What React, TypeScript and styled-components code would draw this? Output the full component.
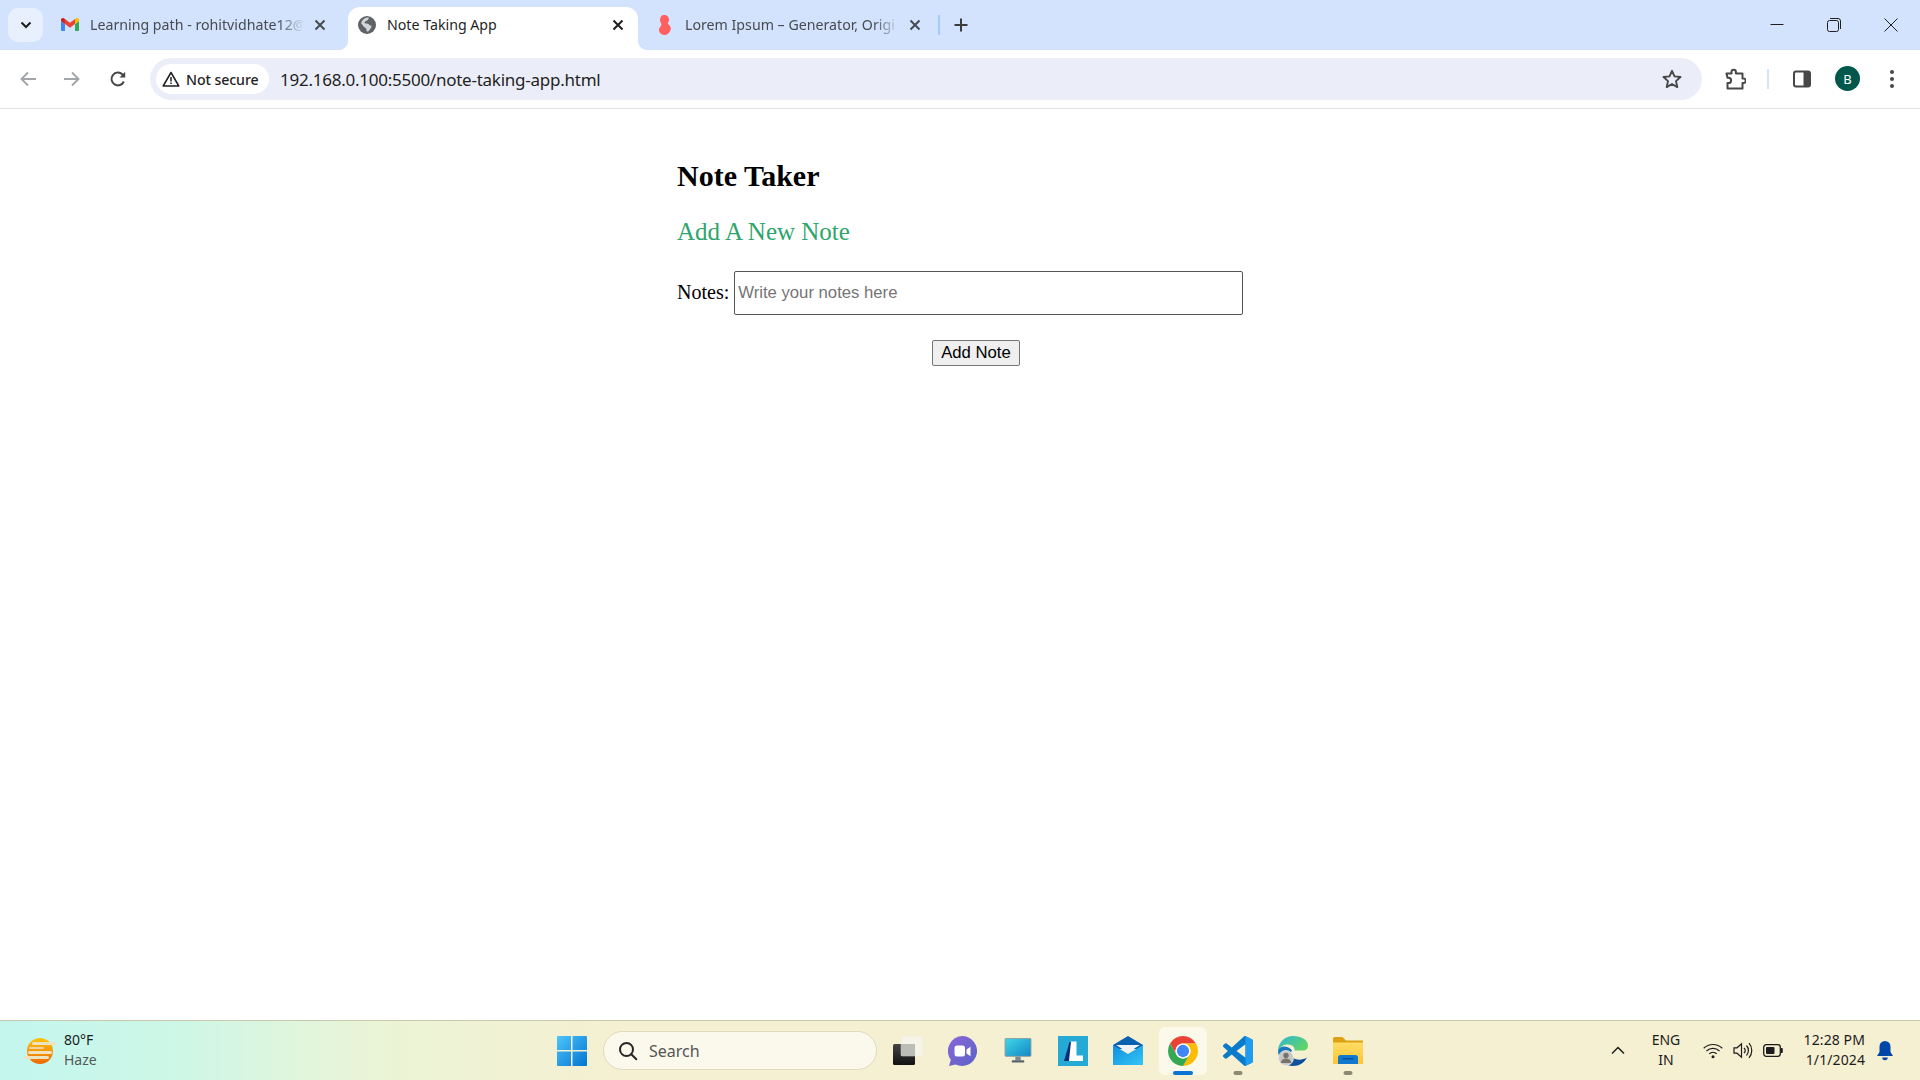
import React from "react";
import styled, { createGlobalStyle } from "styled-components";

const Global = createGlobalStyle`
  html, body { margin: 0; padding: 0; height: 100%; overflow: hidden; background: #fff; }
  #root { height: 100%; }
  * { box-sizing: border-box; }
`;

const uiFont = `"Noto Sans", "Open Sans", "Liberation Sans", sans-serif`;

const Page = styled.div`
  width: 1920px;
  height: 1080px;
  display: flex;
  flex-direction: column;
  font-family: ${uiFont};
`;

/* ---------- tab strip ---------- */
const TabStrip = styled.div`
  height: 50px;
  flex: none;
  background: #d3e3fd;
  display: flex;
  align-items: flex-end;
  padding-left: 8px;
`;
const TabList = styled.button`
  width: 35px;
  height: 34px;
  margin: 0 8px 8px 0;
  flex: none;
  padding: 0;
  border: 0;
  border-radius: 10px;
  background: #e9f0fd;
  display: flex;
  align-items: center;
  justify-content: center;
`;
const Tab = styled.div<{ $active?: boolean; $width: number; $left: number; $right: number }>`
  position: relative;
  flex: none;
  width: ${(p) => p.$width}px;
  height: 43px;
  padding: 0 ${(p) => p.$right}px 7px ${(p) => p.$left}px;
  display: flex;
  align-items: center;
  border-radius: 12px 12px 0 0;
  background: ${(p) => (p.$active ? "#fff" : "transparent")};
  color: ${(p) => (p.$active ? "#1f1f1f" : "#474b50")};
  ${(p) =>
    p.$active
      ? `
    &::before, &::after {
      content: "";
      position: absolute;
      bottom: 0;
      width: 10px;
      height: 10px;
    }
    &::before { left: -10px; background: radial-gradient(circle at 0 0, transparent 10px, #fff 10.5px); }
    &::after { right: -10px; background: radial-gradient(circle at 100% 0, transparent 10px, #fff 10.5px); }
  `
      : ""}
`;
const Favicon = styled.span<{ $gap: number }>`
  width: 18px;
  height: 20px;
  flex: none;
  margin-right: ${(p) => p.$gap}px;
  display: flex;
  align-items: center;
  justify-content: center;
`;
const TabTitle = styled.span<{ $fade?: boolean }>`
  flex: 1;
  min-width: 0;
  white-space: nowrap;
  font-size: 14.2px;
  line-height: 20px;
  ${(p) =>
    p.$fade
      ? `-webkit-mask-image: linear-gradient(90deg, #000 88%, transparent 100%);
         mask-image: linear-gradient(90deg, #000 88%, transparent 100%);`
      : ""}
`;
const TabClose = styled.span`
  width: 16px;
  height: 16px;
  flex: none;
  margin-left: 8px;
  display: flex;
  align-items: center;
  justify-content: center;
`;
const TabDivider = styled.span`
  width: 2px;
  height: 20px;
  flex: none;
  margin: 0 13px 15px 2px;
  background: #a8c7fa;
`;
const NewTab = styled.span`
  width: 18px;
  height: 18px;
  flex: none;
  margin-bottom: 16px;
  margin-left: -1px;
  display: flex;
`;
const WindowControls = styled.div`
  margin-left: auto;
  height: 50px;
  display: flex;
  align-items: center;
  padding-right: 22px;
  gap: 43px;
`;

/* ---------- toolbar ---------- */
const Toolbar = styled.div`
  height: 59px;
  flex: none;
  background: #fff;
  border-radius: 10px 10px 0 0;
  border-bottom: 1px solid #e3e3e3;
  display: flex;
  align-items: center;
  padding: 0 18px 0 19px;
`;
const NavButton = styled.span<{ $gap: number }>`
  width: 18px;
  height: 18px;
  flex: none;
  margin-right: ${(p) => p.$gap}px;
  display: flex;
`;
const Omnibox = styled.div`
  width: 1552px;
  height: 42px;
  flex: none;
  border-radius: 21px;
  background: #ebeef8;
  display: flex;
  align-items: center;
  padding: 0 20px 0 6px;
`;
const SecurityChip = styled.div`
  height: 30px;
  width: 113px;
  flex: none;
  border-radius: 15px;
  background: #fff;
  display: flex;
  align-items: center;
  gap: 6px;
  padding-left: 6px;
  font-size: 14.2px;
  font-weight: 500;
  letter-spacing: -0.1px;
  color: #1f1f1f;
`;
const Url = styled.span`
  margin-left: 11px;
  flex: 1;
  font-size: 17px;
  letter-spacing: -0.25px;
  color: #1f1f1f;
  white-space: nowrap;
`;
const ToolIcon = styled.span<{ $left: number }>`
  flex: none;
  margin-left: ${(p) => p.$left}px;
  display: flex;
`;
const ToolSeparator = styled.span`
  width: 2px;
  height: 20px;
  flex: none;
  margin-left: 21px;
  background: #d3e3fd;
`;
const Avatar = styled.span`
  width: 25px;
  height: 25px;
  flex: none;
  margin-left: 24px;
  margin-bottom: 1px;
  border-radius: 50%;
  background: #00574b;
  color: #fff;
  font-size: 13px;
  display: flex;
  align-items: center;
  justify-content: center;
`;

/* ---------- page ---------- */
const Main = styled.main`
  flex: 1;
  background: #fff;
  padding: 50px 0 0 677px;
  font-family: "Liberation Serif", serif;
  color: #000;
`;
const Title = styled.h1`
  margin: 0;
  font-size: 30px;
  line-height: 34px;
  font-weight: 700;
`;
const Subtitle = styled.h2`
  margin: 24px 0 0;
  font-size: 25px;
  line-height: 30px;
  font-weight: 400;
  color: #2ea56d;
`;
const NoteRow = styled.label`
  margin-top: 24px;
  display: flex;
  align-items: center;
  gap: 5px;
  font-size: 20px;
  line-height: 23px;
`;
const NoteLabel = styled.span`
  padding-bottom: 2px;
`;
const NoteInput = styled.input`
  width: 509px;
  height: 44px;
  padding: 0 3px;
  border: 1.5px solid #555;
  border-radius: 2px;
  font-family: "Liberation Sans", sans-serif;
  font-size: 16.7px;
  color: #000;
  outline: none;
  &::placeholder { color: #757575; opacity: 1; }
`;
const AddButton = styled.button`
  display: block;
  width: 88px;
  height: 26px;
  margin: 25px 0 0 255px;
  padding: 0;
  border: 1.2px solid #767676;
  border-radius: 2px;
  background: #efefef;
  font-family: "Liberation Sans", sans-serif;
  font-size: 16.7px;
  color: #000;
`;

/* ---------- taskbar ---------- */
const Taskbar = styled.footer`
  height: 60px;
  flex: none;
  border-top: 1px solid #c8c8ac;
  background: linear-gradient(90deg, #c4f6ef 0%, #cdf7e6 9%, #ecf4d6 20%, #f5f0d2 32%, #f5f0d2 100%);
  display: flex;
  align-items: center;
`;
const Weather = styled.div`
  width: 557px;
  flex: none;
  display: flex;
  align-items: center;
  padding-left: 24px;
  gap: 8px;
`;
const WeatherText = styled.div`
  font-size: 14px;
  line-height: 20px;
  color: #1c1c1c;
  padding-bottom: 2px;
`;
const Muted = styled.div`
  color: #555a58;
`;
const StartIcon = styled.span`
  width: 46px;
  flex: none;
  display: flex;
`;
const SearchBox = styled.div`
  width: 274px;
  height: 39px;
  flex: none;
  border: 1px solid #e0dbbc;
  border-radius: 20px;
  background: #fbf9ec;
  display: flex;
  align-items: center;
  gap: 11px;
  padding-left: 14px;
  font-size: 16px;
  color: #555;
`;
const TaskApps = styled.div`
  flex: none;
  margin-left: 3px;
  display: flex;
`;
const AppCell = styled.div<{ $active?: boolean }>`
  position: relative;
  width: 55px;
  height: 48px;
  display: flex;
  align-items: center;
  justify-content: center;
  &::before {
    content: "";
    position: absolute;
    inset: 0 3.5px;
    border-radius: 6px;
    background: ${(p) => (p.$active ? "#fbf9ea" : "transparent")};
  }
  & > svg { position: relative; }
`;
const RunDot = styled.span<{ $active?: boolean }>`
  position: absolute;
  bottom: 0;
  left: 50%;
  transform: translateX(-50%);
  height: 4px;
  border-radius: 2px;
  width: ${(p) => (p.$active ? 20 : 9)}px;
  background: ${(p) => (p.$active ? "#0a74d4" : "#8c8a74")};
`;
const Tray = styled.div`
  flex: 1;
  display: flex;
  align-items: center;
  padding-left: 236px;
  color: #1c1c1c;
  font-size: 14px;
  line-height: 20px;
`;
const Lang = styled.div`
  width: 30px;
  margin-left: 26px;
  flex: none;
  text-align: center;
  padding-bottom: 2px;
`;
const TrayIcons = styled.div`
  margin-left: 22px;
  flex: none;
  display: flex;
  align-items: center;
  gap: 10px;
`;
const Clock = styled.div`
  width: 63px;
  margin-left: 19px;
  flex: none;
  text-align: right;
  white-space: nowrap;
  letter-spacing: 0.1px;
  padding-bottom: 2px;
`;
const Bell = styled.span`
  margin-left: 12px;
  flex: none;
  display: flex;
`;

/* ---------- icons ---------- */
const X = ({ c = "#474b50" }: { c?: string }) => (
  <svg width={16} height={16} viewBox="0 0 16 16" fill="none" stroke={c} strokeWidth={2}>
    <path d="M3.500 3.500l9 9M12.500 3.500l-9 9" />
  </svg>
);
const WindowClose = () => (
  <svg width="14" height="14" viewBox="0 0 14 14" fill="none" stroke="#1f1f1f" strokeWidth="1">
    <path d="M.5.5l13 13M13.500.5l-13 13" />
  </svg>
);
const Gmail = () => (
  <svg width="18" height="18" viewBox="0 0 24 24">
    <path fill="#4285F4" d="M1.500 20h3.800V10.800L0 6.800V18.500c0 .8.7 1.500 1.500 1.500z" />
    <path fill="#34A853" d="M18.700 20h3.800c.8 0 1.500-.7 1.500-1.500V6.800l-5.300 4z" />
    <path fill="#FBBC04" d="M18.700 4.100v6.700L24 6.800V5c0-2-2.200-3.100-3.800-1.900z" />
    <path fill="#EA4335" d="M5.300 10.800V4.100L12 9.100l6.700-5v6.700L12 15.800z" />
    <path fill="#C5221F" d="M0 5v1.800l5.300 4V4.100L3.800 3.100C2.200 1.900 0 3 0 5z" />
  </svg>
);
const Globe = () => (
  <svg width="18" height="18" viewBox="0 0 18 18">
    <circle cx="9" cy="9" r="9" fill="#5f6368" />
    <path fill="#d3d5d8" d="M10.600 1.500c.6 1.300-.6 2.200-1.500 3-.7.6-1.500.6-2.200 1.200-.8.7-.2 1.600.7 1.800 1.600.2 2.700-.1 3.400 1 .5.8 1 1.100 1.900 1.100.9 0 .7 1.100.3 1.900-.7 1.300-1.600 2.600-3 4-.6 0-1.200 0-1.700-.2.1-1.200.1-2.200-.6-3-.8-.9-2.200-1-2.700-2.200-.4-.9-.9-1.600-2-2.300.3-3.300 2.900-5.900 6.100-6.300 0 0 1.100-.1 1.300 0z" />
  </svg>
);
const LoremMark = () => (
  <svg width="16" height="20" viewBox="0 0 16 20">
    <path fill="#ff5f5f" d="M7 0c3 0 5 2 5 4.500 0 1.800-1 2.700-1.200 3.600-.1.8 1.400 2.100 2.300 3.100.9 1 .9 2.800.2 4.300C12.300 18 10 20 7.600 20 5 20 3.200 18.500 2.300 16.400 1.500 14.700 2.200 13 3.300 11.800c.8-.9 1.300-1.800 1-3C3.900 7.500 2.800 6.500 3 4.500 3.200 2 4.500 0 7 0z" />
  </svg>
);
const Arrow = ({ d }: { d: string }) => (
  <svg width="18" height="18" viewBox="0 0 18 18" fill="none" stroke="#a2a5a9" strokeWidth="1.900">
    <path d={d} />
  </svg>
);
const Reload = () => (
  <svg width="18" height="18" viewBox="0 0 18 18" fill="none" stroke="#474747" strokeWidth="2">
    <path d="M14.800 11.500A6.400 6.400 0 1 1 13.500 4.500L15.500 6.500" />
    <path d="M16.200 1.800v5.700h-5.700z" fill="#474747" stroke="none" />
  </svg>
);
const Warning = () => (
  <svg width="18" height="16" viewBox="0 0 18 16" fill="none">
    <path d="M9 1.500L16.800 15H1.200z" stroke="#1f1f1f" strokeWidth="1.500" strokeLinejoin="round" />
    <path d="M9 6v4.500M9 11.600v1.500" stroke="#1f1f1f" strokeWidth="1.500" />
  </svg>
);
const Star = () => (
  <svg width="20" height="20" viewBox="0 0 20 20" fill="none" stroke="#474747" strokeWidth="1.900" strokeLinejoin="round">
    <path d="M10 1.800l2.500 5.600 6 .6-4.500 4.100 1.300 6L10 15l-5.300 3.100 1.300-6L1.500 8l6-.6z" />
  </svg>
);
const Puzzle = () => (
  <svg width="22" height="22" viewBox="0 0 22 22" fill="none" stroke="#474747" strokeWidth="2" strokeLinejoin="round">
    <path d="M2.500 5.500h5V4a2.200 2.200 0 0 1 4.400 0v1.500h6.600v5h1a2.200 2.200 0 0 1 0 4.400h-1v5.600h-15V15h1a2.600 2.600 0 0 0 0-5.200h-1z" />
  </svg>
);
const SidePanel = () => (
  <svg width="18" height="18" viewBox="0 0 18 18">
    <rect x="1" y="1.500" width="16" height="15" rx="2" fill="none" stroke="#474747" strokeWidth="2" />
    <rect x="10.500" y="1.500" width="6.500" height="15" fill="#474747" />
  </svg>
);
const Dots = () => (
  <svg width="6" height="20" viewBox="0 0 6 20" fill="#474747">
    <circle cx="3" cy="3" r="2" />
    <circle cx="3" cy="10" r="2" />
    <circle cx="3" cy="17" r="2" />
  </svg>
);
const Minimize = () => (
  <svg width="14" height="14" viewBox="0 0 14 14" stroke="#1f1f1f" strokeWidth="1">
    <path d="M0.500 6.500h13" />
  </svg>
);
const Restore = () => (
  <svg width="14" height="14" viewBox="0 0 14 14" fill="none" stroke="#1f1f1f" strokeWidth="1">
    <rect x="0.500" y="2.500" width="11" height="11" rx="2" />
    <path d="M3 .500h8a2.500 2.500 0 0 1 2.500 2.500v8" />
  </svg>
);
const SunHaze = () => (
  <svg width="32" height="28" viewBox="0 0 32 28">
    <defs>
      <linearGradient id="sun" x1="0" y1="0" x2="0" y2="1">
        <stop offset="0" stopColor="#fdc50f" />
        <stop offset="1" stopColor="#ec6a06" />
      </linearGradient>
    </defs>
    <circle cx="16" cy="14" r="13" fill="url(#sun)" />
    <g fill="#efe3bd">
      <rect x="8" y="5" width="24" height="3" rx="1.500" />
      <rect x="5" y="10" width="15" height="2" rx="1" opacity=".8" />
      <rect x="4" y="14" width="24" height="3" rx="1.500" />
      <rect x="0" y="19" width="25" height="3" rx="1.500" />
    </g>
  </svg>
);
const WinLogo = () => (
  <svg width="30" height="30" viewBox="0 0 30 30">
    <defs>
      <linearGradient id="win" x1="0" y1="0" x2="1" y2="1">
        <stop offset="0" stopColor="#4cc6fa" />
        <stop offset="1" stopColor="#0473d2" />
      </linearGradient>
    </defs>
    <path fill="url(#win)" d="M1 0h13v14H0V1a1 1 0 0 1 1-1zM15.500 0H29a1 1 0 0 1 1 1v13H15.500zM0 15.500h14V30H1a1 1 0 0 1-1-1zM15.500 15.500H30V29a1 1 0 0 1-1 1H15.500z" />
  </svg>
);
const Magnifier = () => (
  <svg width="20" height="20" viewBox="0 0 20 20" fill="none" stroke="#262626" strokeWidth="2">
    <circle cx="8.500" cy="8.500" r="6.500" />
    <path d="M13.300 13.300l5 5" strokeLinecap="round" />
  </svg>
);
const TaskView = () => (
  <svg width="30" height="30" viewBox="0 0 30 30">
    <defs>
      <linearGradient id="tvd" x1="0" y1="0" x2="0" y2="1">
        <stop offset="0" stopColor="#444" />
        <stop offset="1" stopColor="#111" />
      </linearGradient>
    </defs>
    <rect x="0" y="8" width="22" height="21" rx="1.500" fill="url(#tvd)" />
    <rect x="8" y="0" width="22" height="20" rx="1.500" fill="#f6f4ea" fillOpacity=".85" stroke="#e8e6dc" strokeWidth=".5" />
    <rect x="8" y="8" width="14" height="12" fill="#bdbdb8" />
  </svg>
);
const Meet = () => (
  <svg width="30" height="30" viewBox="1 0 30 30">
    <defs>
      <linearGradient id="meet" x1="0" y1="0" x2="1" y2="1">
        <stop offset="0" stopColor="#8a67d8" />
        <stop offset="1" stopColor="#5a62c6" />
      </linearGradient>
    </defs>
    <path fill="url(#meet)" d="M15 0a15 15 0 1 1-6.500 28.500L2 30l1.800-6.300A15 15 0 0 1 15 0z" />
    <rect x="7.500" y="9.500" width="10.500" height="11" rx="2.500" fill="#fff" />
    <path fill="#fff" d="M19.500 13.500l4-2.800v9.600l-4-2.800z" />
  </svg>
);
const Monitor = () => (
  <svg width="28" height="25" viewBox="0 0 30 28">
    <defs>
      <linearGradient id="scr" x1="0" y1="0" x2="1" y2="1">
        <stop offset="0" stopColor="#3fd8e6" />
        <stop offset="1" stopColor="#1486c6" />
      </linearGradient>
    </defs>
    <rect x="0.500" y="0.500" width="29" height="20" rx="1" fill="url(#scr)" stroke="#8c9a9e" />
    <rect x="12" y="21" width="6" height="4" fill="#7b8a90" />
    <rect x="8" y="25" width="14" height="2.500" rx="1" fill="#56656c" />
  </svg>
);
const LApp = () => (
  <svg width="30" height="30" viewBox="0 0 30 30">
    <rect width="30" height="30" fill="#25aad6" />
    <path fill="#0c2e78" d="M6 25L11.500 6h2v19z" />
    <path fill="#fff" d="M13 5.500h5.500v14H25V25H11z" />
  </svg>
);
const Mail = () => (
  <svg width="30" height="29" viewBox="0 0 30 29">
    <defs>
      <linearGradient id="mailb" x1="0" y1="0" x2="1" y2="1">
        <stop offset="0" stopColor="#0f8fe0" />
        <stop offset="1" stopColor="#34c5f5" />
      </linearGradient>
    </defs>
    <path fill="#0a5fb0" d="M15 0l15 9v4H0V9z" />
    <path fill="url(#mailb)" d="M0 9l15 9 15-9v20H0z" />
    <path fill="#eef2f6" d="M3 9h24L15 16.500z" />
  </svg>
);
const ChromeLogo = () => (
  <svg width="30" height="30" viewBox="2 2 44 44">
    <path fill="#ea4335" d="M4.950 13A22 22 0 0 1 43.050 13H24A11 11 0 0 0 14.470 29.500Z" />
    <path fill="#fbbc04" d="M43.050 13A22 22 0 0 1 24 46L33.530 29.500A11 11 0 0 0 24 13Z" />
    <path fill="#34a853" d="M24 46A22 22 0 0 1 4.950 13L14.470 29.500A11 11 0 0 0 33.530 29.500Z" />
    <circle cx="24" cy="24" r="11" fill="#fff" />
    <circle cx="24" cy="24" r="9" fill="#4285f4" />
  </svg>
);
const VSCode = () => (
  <svg width="30" height="30" viewBox="0 0 24 24">
    <path fill="#0a7acb" d="M23.150 2.587L18.210.21a1.494 1.494 0 0 0-1.705.29l-9.460 8.630-4.120-3.128a.999.999 0 0 0-1.276.057L.327 7.261A1 1 0 0 0 .326 8.740L3.899 12 .326 15.260a1 1 0 0 0 .001 1.479L1.650 17.940a.999.999 0 0 0 1.276.057l4.120-3.128 9.460 8.630a1.492 1.492 0 0 0 1.704.29l4.942-2.377A1.500 1.500 0 0 0 24 20.060V3.939a1.500 1.500 0 0 0-.85-1.352zm-5.146 14.861L10.826 12l7.178-5.448v10.896z" />
    <path fill="#1f9cf0" d="M16.500.5a1.500 1.500 0 0 1 1.710-.29l4.940 2.377A1.500 1.500 0 0 1 24 3.939V20.060a1.500 1.500 0 0 1-.85 1.350l-4.940 2.380a1.490 1.490 0 0 1-1.710-.29c.6.600 1.500.100 1.500-.6V1.100c0-.7-.9-1.200-1.500-.6z" />
  </svg>
);
const Edge = () => (
  <svg width="30" height="30" viewBox="0 0 30 30">
    <defs>
      <linearGradient id="edgeA" x1="0" y1="0" x2="1" y2="0.600">
        <stop offset="0" stopColor="#2bb6d8" />
        <stop offset="1" stopColor="#60d468" />
      </linearGradient>
      <linearGradient id="edgeB" x1="0" y1="0" x2="1" y2="1">
        <stop offset="0" stopColor="#1b84c8" />
        <stop offset="1" stopColor="#0b3f8a" />
      </linearGradient>
    </defs>
    <path fill="url(#edgeA)" d="M15 0C6.500 0 .5 6.500 0 14.500 3 9 8.500 7.500 13 9c3 1 4 3.500 3.500 5.500h10c2-1 3.500-2 3.500-5C30 4 23.500 0 15 0z" />
    <path fill="url(#edgeB)" d="M0 14.500C0 23 6.500 30 15 30c6 0 11.500-3.500 14-8.500-4 2.500-10 3-13.500.5-3.500-2-3.500-5-1.500-7.500C10 9 1.500 9 0 14.500z" />
    <circle cx="8" cy="22" r="7.500" fill="#c9c9c4" stroke="#eee" strokeWidth=".7" />
    <circle cx="8" cy="19.500" r="2.700" fill="#77736f" />
    <path fill="#77736f" d="M2.800 27a5.200 4.500 0 0 1 10.400 0z" />
  </svg>
);
const Folder = () => (
  <svg width="30" height="27" viewBox="0 0 30 27">
    <defs>
      <linearGradient id="fold" x1="0" y1="0" x2="0" y2="1">
        <stop offset="0" stopColor="#ffdc64" />
        <stop offset="1" stopColor="#fcc636" />
      </linearGradient>
    </defs>
    <path fill="#dca213" d="M0 1.500A1.500 1.500 0 0 1 1.500 0h8l3.500 3.500h17V8H0z" />
    <path fill="url(#fold)" d="M0 5.500h30V27H0z" />
    <path fill="#0f78cf" d="M5 27v-6.500A2.500 2.500 0 0 1 7.500 18h15a2.500 2.500 0 0 1 2.500 2.500V27z" />
    <rect x="9.500" y="21" width="11" height="1.500" fill="#084f9a" />
  </svg>
);
const Chevron = () => (
  <svg width="14" height="9" viewBox="0 0 14 9" fill="none" stroke="#1c1c1c" strokeWidth="1.500">
    <path d="M1 7.500l6-6 6 6" />
  </svg>
);
const Wifi = () => (
  <svg width="20" height="16" viewBox="0 0 20 16" fill="none" stroke="#1c1c1c" strokeWidth="1.200">
    <path d="M.7 5.200a13.500 13.500 0 0 1 18.600 0M3.500 8a9.500 9.500 0 0 1 13 0M6.300 10.800a5.400 5.400 0 0 1 7.400 0" />
    <circle cx="10" cy="13.800" r="1.500" fill="#1c1c1c" stroke="none" />
  </svg>
);
const Volume = () => (
  <svg width="20" height="17" viewBox="0 0 20 17" fill="none" stroke="#1c1c1c" strokeWidth="1.200">
    <path d="M1 5.800h3l4.500-4v13.400l-4.500-4H1z" />
    <path d="M11 5.800a4 4 0 0 1 0 5.400M13.500 3.500a7.500 7.500 0 0 1 0 10M16 1.200a11 11 0 0 1 0 14.600" />
  </svg>
);
const Battery = () => (
  <svg width="20" height="13" viewBox="0 0 20 13">
    <rect x=".7" y=".7" width="16.600" height="11.600" rx="2.500" fill="none" stroke="#1c1c1c" strokeWidth="1.300" />
    <rect x="3" y="3" width="8.500" height="7" rx="1" fill="#1c1c1c" />
    <path d="M18 4h.8a1 1 0 0 1 1 1v3a1 1 0 0 1-1 1H18z" fill="#1c1c1c" />
  </svg>
);
const BellIcon = () => (
  <svg width="16" height="20" viewBox="0 0 16 20" fill="#0048a8">
    <path d="M8 0a5.500 5.500 0 0 1 5.500 5.500V11l2.500 4H0l2.500-4V5.500A5.500 5.500 0 0 1 8 0z" />
    <path d="M5.300 16.500h5.400a2.700 2.700 0 0 1-5.400 0z" />
  </svg>
);

export default function App() {
  return (
    <Page>
      <Global />
      <TabStrip>
        <TabList>
          <svg width="12" height="8" viewBox="0 0 12 8" fill="none" stroke="#1f1f1f" strokeWidth="2">
            <path d="M1.500 1.500L6 6l4.500-4.500" />
          </svg>
        </TabList>
        <Tab $width={297} $left={10} $right={20}>
          <Favicon $gap={11}><Gmail /></Favicon>
          <TabTitle $fade>Learning path - rohitvidhate12@</TabTitle>
          <TabClose><X /></TabClose>
        </Tab>
        <Tab $active $width={290} $left={10} $right={12}>
          <Favicon $gap={11}><Globe /></Favicon>
          <TabTitle>Note Taking App</TabTitle>
          <TabClose><X c="#1f1f1f" /></TabClose>
        </Tab>
        <Tab $width={298} $left={18} $right={13}>
          <Favicon $gap={11}><LoremMark /></Favicon>
          <TabTitle $fade>Lorem Ipsum – Generator, Origi</TabTitle>
          <TabClose><X /></TabClose>
        </Tab>
        <TabDivider />
        <NewTab>
          <svg width="18" height="18" viewBox="0 0 18 18" stroke="#3c3c3c" strokeWidth="2">
            <path d="M9 2.500v13M2.500 9h13" />
          </svg>
        </NewTab>
        <WindowControls>
          <Minimize />
          <Restore />
          <WindowClose />
        </WindowControls>
      </TabStrip>

      <Toolbar>
        <NavButton $gap={26}><Arrow d="M17 9H2.500M9 2.500L2.500 9 9 15.500" /></NavButton>
        <NavButton $gap={28}><Arrow d="M1 9H15.500M9 2.500L15.500 9 9 15.500" /></NavButton>
        <NavButton $gap={23}><Reload /></NavButton>
        <Omnibox>
          <SecurityChip>
            <Warning />
            Not secure
          </SecurityChip>
          <Url>192.168.0.100:5500/note-taking-app.html</Url>
          <Star />
        </Omnibox>
        <ToolIcon $left={22}><Puzzle /></ToolIcon>
        <ToolSeparator />
        <ToolIcon $left={24}><SidePanel /></ToolIcon>
        <Avatar>B</Avatar>
        <ToolIcon $left={29}><Dots /></ToolIcon>
      </Toolbar>

      <Main>
        <Title>Note Taker</Title>
        <Subtitle>Add A New Note</Subtitle>
        <NoteRow>
          <NoteLabel>Notes:</NoteLabel>
          <NoteInput placeholder="Write your notes here" />
        </NoteRow>
        <AddButton>Add Note</AddButton>
      </Main>

      <Taskbar>
        <Weather>
          <SunHaze />
          <WeatherText>
            80°F
            <Muted>Haze</Muted>
          </WeatherText>
        </Weather>
        <StartIcon><WinLogo /></StartIcon>
        <SearchBox>
          <Magnifier />
          Search
        </SearchBox>
        <TaskApps>
          <AppCell><TaskView /></AppCell>
          <AppCell><Meet /></AppCell>
          <AppCell><Monitor /></AppCell>
          <AppCell><LApp /></AppCell>
          <AppCell><Mail /></AppCell>
          <AppCell $active><ChromeLogo /><RunDot $active /></AppCell>
          <AppCell><VSCode /><RunDot /></AppCell>
          <AppCell><Edge /></AppCell>
          <AppCell><Folder /><RunDot /></AppCell>
        </TaskApps>
        <Tray>
          <Chevron />
          <Lang>ENG<br />IN</Lang>
          <TrayIcons>
            <Wifi />
            <Volume />
            <Battery />
          </TrayIcons>
          <Clock>12:28 PM<br />1/1/2024</Clock>
          <Bell><BellIcon /></Bell>
        </Tray>
      </Taskbar>
    </Page>
  );
}
